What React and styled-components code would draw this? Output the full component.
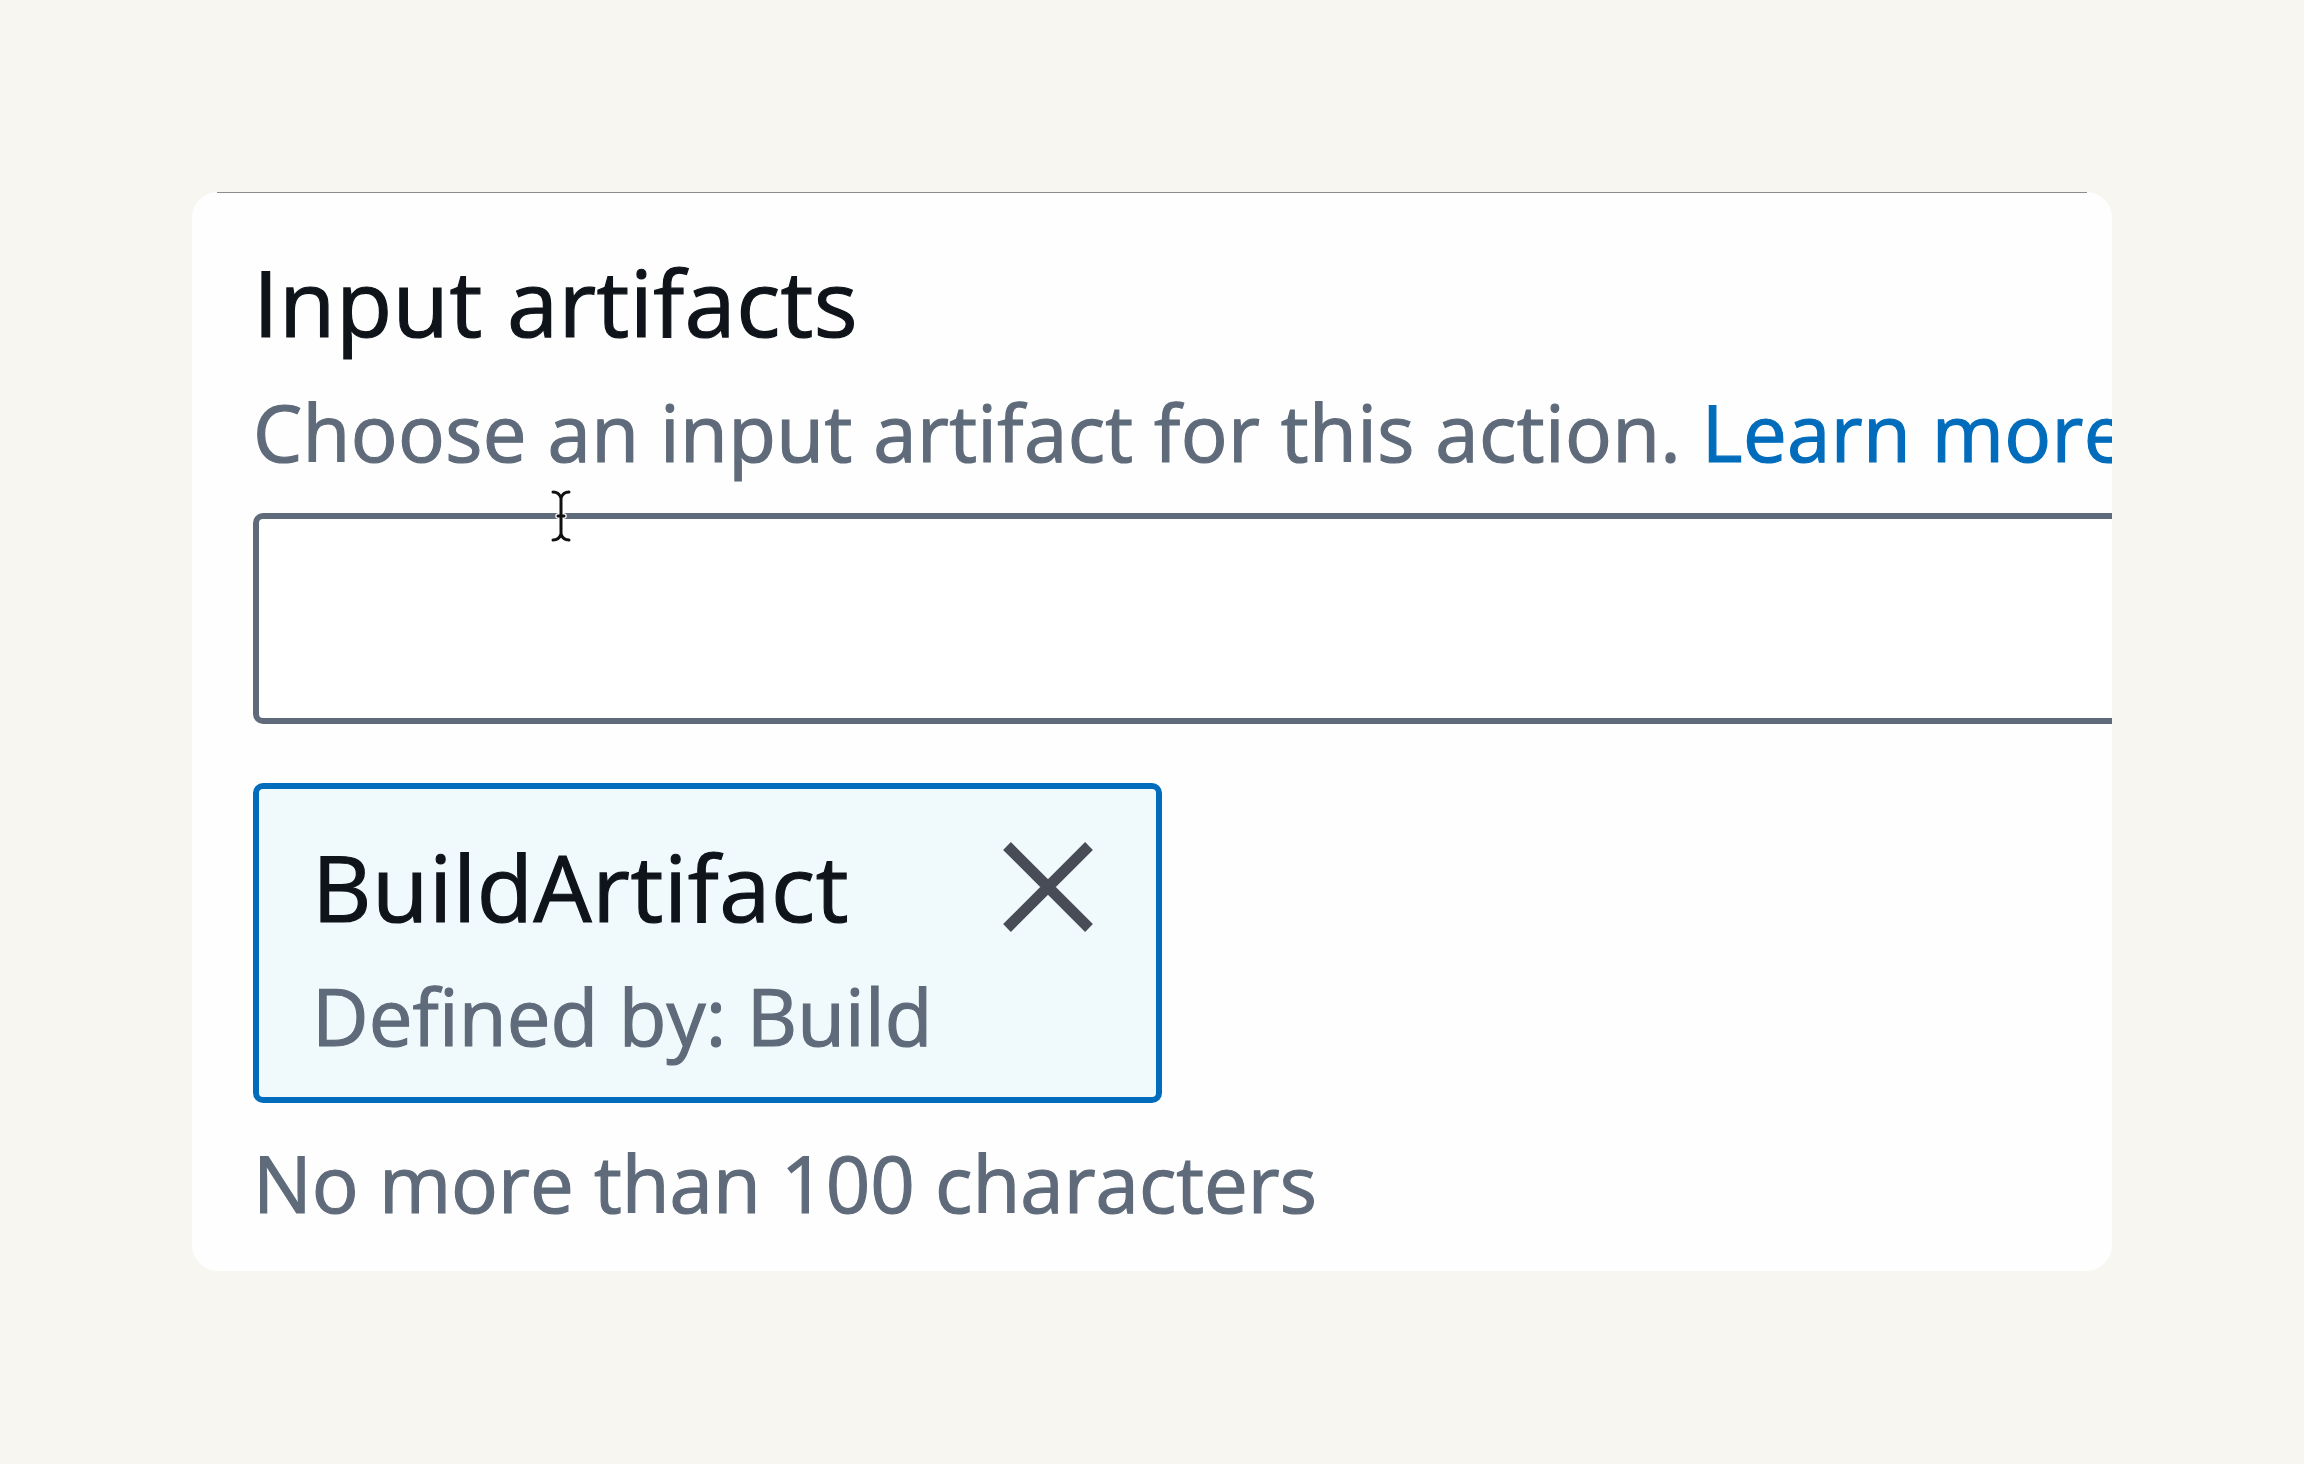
import styled, { createGlobalStyle } from "styled-components";

const GlobalStyle = createGlobalStyle`
  html, body {
    margin: 0;
    background: #f8f6f1;
  }
  body {
    font-family: "Open Sans", "Noto Sans", sans-serif;
    -webkit-text-stroke: 1.2px currentColor;
  }
`;

const Page = styled.div`
  min-height: 1464px;
  box-sizing: border-box;
  padding: 192px 0 0 192px;
`;

const Card = styled.section`
  position: relative;
  width: 1920px;
  box-sizing: border-box;
  padding: 50px 0 38px 61px;
  background: #fefefe;
  border-radius: 26px;
  overflow: hidden;
  display: flex;
  flex-direction: column;
  align-items: flex-start;

  &::before {
    content: "";
    position: absolute;
    top: 0;
    left: 25px;
    right: 25px;
    height: 1px;
    background: #8e8c89;
  }
`;

const Label = styled.h2`
  margin: 0;
  font-size: 92px;
  line-height: 120px;
  font-weight: 400;
  letter-spacing: 0.4px;
  color: #0f141a;
  white-space: nowrap;
`;

const Description = styled.p`
  margin: 20px 0 0;
  font-size: 78px;
  line-height: 100px;
  letter-spacing: 0.35px;
  color: #5f6b7a;
  white-space: nowrap;
`;

const Link = styled.a`
  color: #006cbb;
  text-decoration: none;
`;

const Input = styled.div`
  margin-top: 31px;
  width: 2000px;
  height: 211px;
  box-sizing: border-box;
  border: 6px solid #5f6b7a;
  border-radius: 10px;
  background: #ffffff;
`;

const Token = styled.div`
  margin-top: 59px;
  width: 909px;
  box-sizing: border-box;
  border: 6px solid #006cbb;
  border-radius: 10px;
  background: #f0fafd;
  padding: 38px 63px 31px 53px;
`;

const TokenRow = styled.div`
  display: flex;
  align-items: center;
  justify-content: space-between;
`;

const TokenTitle = styled.span`
  font-size: 92px;
  line-height: 120px;
  letter-spacing: 0.6px;
  color: #0f141a;
`;

const TokenMeta = styled.div`
  margin-top: 19px;
  font-size: 78px;
  line-height: 100px;
  letter-spacing: 0.1px;
  color: #5f6b7a;
`;

const Dismiss = styled.button`
  display: flex;
  padding: 0;
  border: 0;
  background: none;
  color: #474c57;
  cursor: pointer;
`;

const Constraint = styled.div`
  margin-top: 30px;
  font-size: 78px;
  line-height: 100px;
  letter-spacing: 0;
  color: #5f6b7a;
  white-space: nowrap;
`;

const Cursor = styled.svg`
  position: absolute;
  left: 357px;
  top: 297px;
  pointer-events: none;
`;

function CloseIcon() {
  return (
    <svg width="90" height="90" viewBox="0 0 90 90" fill="none">
      <path
        d="M4 4 L86 86 M86 4 L4 86"
        stroke="currentColor"
        strokeWidth="11"
      />
    </svg>
  );
}

function TextCursor() {
  const d =
    "M4 3 Q10 3 12 9 Q14 3 20 3 M12 9 V45 M9 27 H15 M4 51 Q10 51 12 45 Q14 51 20 51";
  return (
    <Cursor width="24" height="54" viewBox="0 0 24 54" fill="none">
      <path d={d} stroke="#ffffff" strokeWidth="5.5" strokeLinecap="round" />
      <path d={d} stroke="#111111" strokeWidth="3" strokeLinecap="round" />
    </Cursor>
  );
}

export default function App() {
  return (
    <>
      <GlobalStyle />
      <Page>
        <Card>
          <Label>Input artifacts</Label>
          <Description>
            Choose an input artifact for this action. <Link href="#">Learn more</Link>
          </Description>
          <Input />
          <Token>
            <TokenRow>
              <TokenTitle>BuildArtifact</TokenTitle>
              <Dismiss aria-label="Remove BuildArtifact">
                <CloseIcon />
              </Dismiss>
            </TokenRow>
            <TokenMeta>Defined by: Build</TokenMeta>
          </Token>
          <Constraint>No more than 100 characters</Constraint>
          <TextCursor />
        </Card>
      </Page>
    </>
  );
}
